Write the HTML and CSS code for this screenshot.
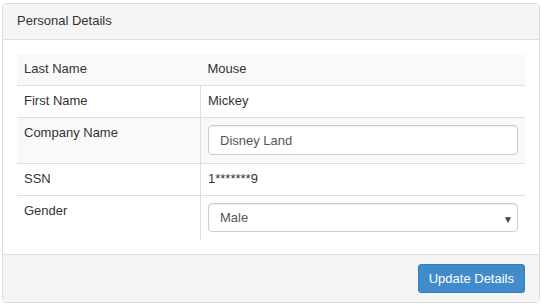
FILE: index.html
```html
<!DOCTYPE html>
<html lang="en">
<head>
  <meta charset="UTF-8" />
  <title>Personal Details</title>
  <link rel="stylesheet" href="styles.css">
</head>
<body>
  <div class="panel">
    <div class="panel-heading">Personal Details</div>
    <div class="panel-body">
      <table class="details">
        <tr class="striped first">
          <td class="label">Last Name</td>
          <td class="value">Mouse</td>
        </tr>
        <tr>
          <td class="label">First Name</td>
          <td class="value">Mickey</td>
        </tr>
        <tr class="striped">
          <td class="label">Company Name</td>
          <td class="value"><input class="field" type="text" value="Disney Land"></td>
        </tr>
        <tr>
          <td class="label">SSN</td>
          <td class="value">1*******9</td>
        </tr>
        <tr>
          <td class="label">Gender</td>
          <td class="value">
            <div class="select-wrap">
              <select class="field">
                <option selected>Male</option>
                <option>Female</option>
              </select>
              <span class="caret">&#9660;</span>
            </div>
          </td>
        </tr>
      </table>
    </div>
    <div class="panel-footer">
      <button class="btn" type="button">Update Details</button>
    </div>
  </div>
</body>
</html>
```

FILE: styles.css
```css
body {
  margin: 3px 2px 0;
  font-family: 'Liberation Sans', Arial, sans-serif;
  font-size: 13px;
  color: #333;
  background: #fff;
}

.panel {
  border: 1px solid #ddd;
  border-radius: 4px;
  box-shadow: 0 1px 1px rgba(0, 0, 0, 0.05);
  overflow: hidden;
}

.panel-heading {
  background: #f5f5f5;
  border-bottom: 1px solid #ddd;
  padding: 9px 14px 11px;
  line-height: 15px;
}

.panel-body {
  padding: 14px;
}

.details {
  width: 100%;
  border-collapse: collapse;
}

.details td {
  padding: 6px 7px 8px;
  line-height: 17px;
  vertical-align: top;
  border-top: 1px solid #ddd;
}

.details tr.first td {
  border-top: none;
}

.details .label {
  width: 169px;
}

.details .value {
  border-left: 1px solid #ddd;
  padding-left: 7px;
}

.details tr.first .value {
  border-left: none;
  padding-left: 7px;
}

.striped td {
  background: #f9f9f9;
}

.field {
  display: block;
  box-sizing: border-box;
  width: 100%;
  height: 30px;
  margin-top: 1px;
  padding: 0 11px;
  font-family: inherit;
  font-size: 13px;
  color: #555;
  background: #fff;
  border: 1px solid #ccc;
  border-radius: 4px;
  box-shadow: inset 0 1px 1px rgba(0, 0, 0, 0.075);
  outline: none;
}

.select-wrap {
  position: relative;
  margin-top: 1px;
}

select.field {
  -webkit-appearance: none;
  appearance: none;
  height: 29px;
  margin-top: 0;
}

.caret {
  position: absolute;
  right: 5px;
  top: 8px;
  font-size: 10px;
  color: #444;
  pointer-events: none;
}

.panel-footer {
  background: #f5f5f5;
  border-top: 1px solid #ddd;
  padding: 9px 14px;
  display: flex;
  justify-content: flex-end;
}

.btn {
  height: 29px;
  padding: 0 10px;
  font-family: inherit;
  font-size: 13px;
  color: #fff;
  background: #428bca;
  border: 1px solid #357ebd;
  border-radius: 3px;
}
```
